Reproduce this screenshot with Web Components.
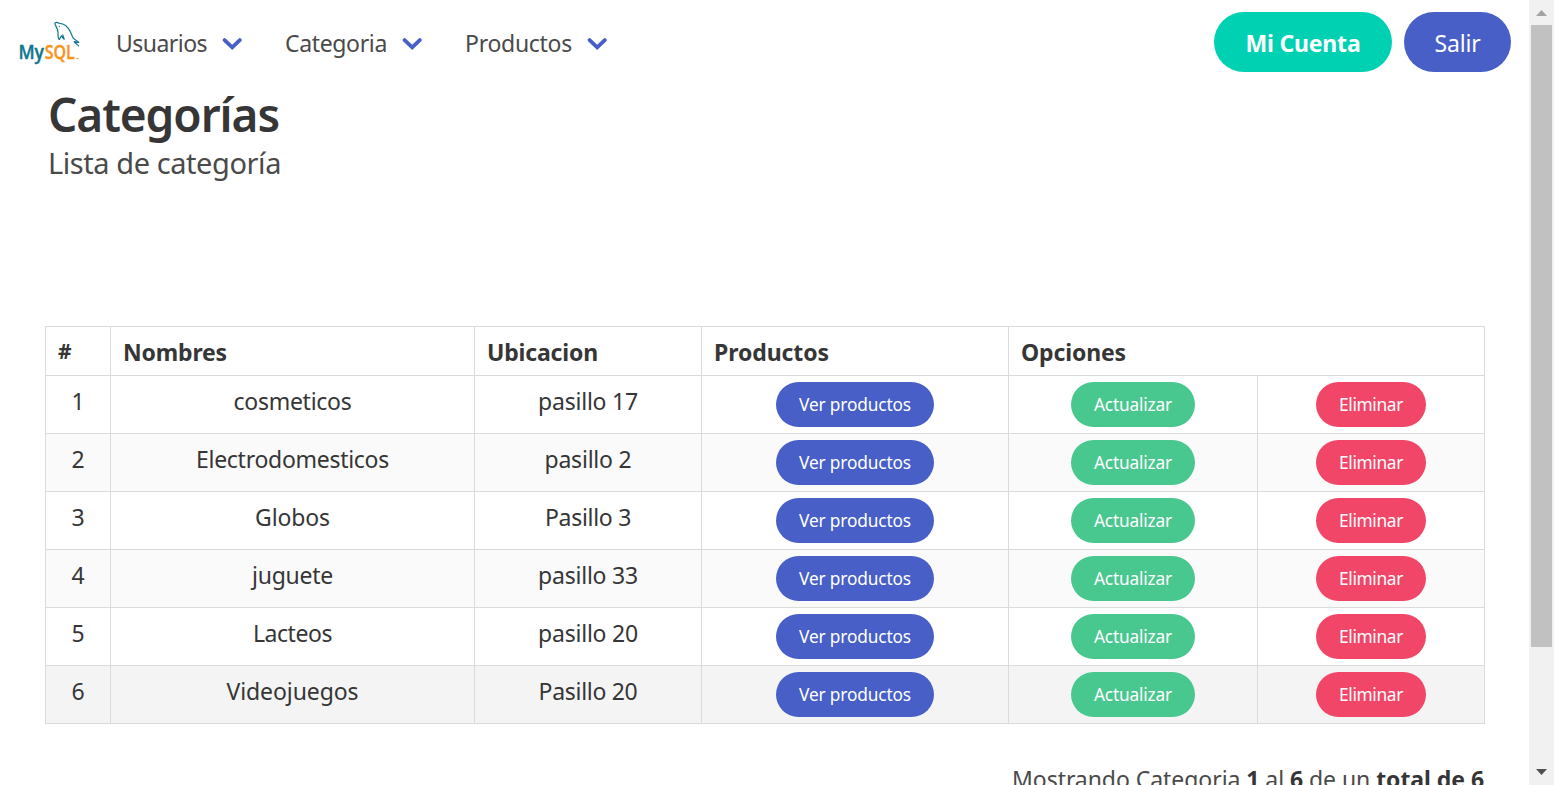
<!DOCTYPE html>
<html lang="es">
<head>
<meta charset="utf-8">
<title>Categorías</title>
<style>
html,body{margin:0;height:100%;overflow:hidden;background:#fff}
body{font-family:"Noto Sans","Open Sans",sans-serif;color:#4a4a4a}
</style>
</head>
<body>
<categories-page></categories-page>
<script>
// Single line of text whose tracking is tuned so that it spans the given width.
customElements.define('fit-text', class extends HTMLElement {
  constructor() {
    super();
    this.attachShadow({mode: 'open'}).innerHTML =
      '<style>:host{display:inline-block;white-space:pre}span{display:inline-block}</style><span><slot></slot></span>';
  }
  connectedCallback() {
    const w = parseFloat(this.getAttribute('w'));
    if (!w) return;
    const span = this.shadowRoot.querySelector('span');
    const n = this.textContent.length;
    span.style.letterSpacing = (w - span.getBoundingClientRect().width) / n + 'px';
  }
});

customElements.define('pill-button', class extends HTMLElement {
  constructor() {
    super();
    this.attachShadow({mode: 'open'}).innerHTML = `<style>
:host{display:inline-flex;box-sizing:border-box;align-items:center;justify-content:center;width:var(--w);height:45px;border-radius:30px;color:#fff;font-size:17.3px;line-height:24px;background:#485fc7}
:host([kind=success]){background:#48c78e}
:host([kind=danger]){background:#f14668}
:host([kind=primary]){background:#00d1b2}
:host([large]){height:60px;font-size:23px;padding-top:2px}
:host([bold]){font-weight:700}
</style><slot></slot>`;
  }
});

customElements.define('brand-logo', class extends HTMLElement {
  constructor() {
    super();
    this.attachShadow({mode: 'open'}).innerHTML = `<style>:host{display:block;width:80px;height:60px}svg{display:block}</style>
<svg width="80" height="60" viewBox="0 0 80 60" fill="none">
<g stroke="#10768f" stroke-width="1.2" stroke-linecap="round" stroke-linejoin="round">
<path d="M49.4 27.4C47.6 26.6 48.2 23 48 20.5C47.8 17 46.5 14.8 45.2 12.6C44.2 10.8 45.6 10 47.5 10.6L49.5 11.3C54 11.5 58 15 60.2 19.5C61.7 22.5 62.3 25 63.6 26.6C65 27.6 67.2 28.6 68.6 30.4"/>
<path d="M49.4 27.4L51.4 23.8C52.2 25.6 53.2 26.6 54.2 27.2C53.6 25.6 53.2 24.6 52.8 22.8"/>
<path d="M68.6 30.4L64.2 29.6C65 31 67 32.2 68.6 33.8"/>
<path d="M49.4 14.4v.2"/></g>
<text x="8.4" y="47.3" font-family="Open Sans,Noto Sans,sans-serif" font-weight="600" font-size="19" fill="#10768f" stroke="#10768f" stroke-width=".4" textLength="25.6" lengthAdjust="spacingAndGlyphs">My</text>
<text x="34.8" y="47.3" font-family="Open Sans,Noto Sans,sans-serif" font-weight="600" font-size="19" fill="#f7941d" stroke="#f7941d" stroke-width=".4" textLength="30" lengthAdjust="spacingAndGlyphs">SQL</text>
<path d="M66 46.5h3" stroke="#f9b868" stroke-width="1.2"/></svg>`;
  }
});

customElements.define('nav-item', class extends HTMLElement {
  constructor() {
    super();
    this.attachShadow({mode: 'open'}).innerHTML = `<style>
:host{display:flex;align-items:center;gap:15px;font-size:23px;line-height:36px}
svg{display:block;flex:none;margin-right:1px}</style><slot></slot>
<svg width="20" height="14" viewBox="0 0 20 14" fill="none" stroke="#485fc7" stroke-width="3.8" stroke-linecap="round" stroke-linejoin="miter"><path d="M2.6 3.1L10.2 10.3L17.8 3.1"/></svg>`;
  }
});

customElements.define('top-bar', class extends HTMLElement {
  constructor() {
    super();
    this.attachShadow({mode: 'open'}).innerHTML = `<style>
:host{display:flex;align-items:center;height:84px;box-sizing:border-box;padding:0 18px 0 10px}
nav{display:flex;gap:42px;margin-left:26px;padding-top:3px}
.end{display:flex;gap:12px;margin-left:auto}
nav fit-text{margin-bottom:2px}</style>
<brand-logo></brand-logo>
<nav>
<nav-item><fit-text w="91">Usuarios</fit-text></nav-item>
<nav-item><fit-text w="102">Categoria</fit-text></nav-item>
<nav-item><fit-text w="107">Productos</fit-text></nav-item>
</nav>
<div class="end">
<pill-button kind="primary" large bold style="--w:178px"><fit-text w="115">Mi Cuenta</fit-text></pill-button>
<pill-button large style="--w:107px"><fit-text w="46">Salir</fit-text></pill-button>
</div>`;
  }
});

customElements.define('category-table', class extends HTMLElement {
  constructor() {
    super();
    const rows = [
      ['1', 'cosmeticos', 118, 'pasillo 17', 100],
      ['2', 'Electrodomesticos', 193, 'pasillo 2', 87],
      ['3', 'Globos', 75, 'Pasillo 3', 86],
      ['4', 'juguete', 81, 'pasillo 33', 100],
      ['5', 'Lacteos', 79, 'pasillo 20', 100],
      ['6', 'Videojuegos', 132, 'Pasillo 20', 99]
    ];
    this.attachShadow({mode: 'open'}).innerHTML = `<style>
:host{display:block;box-sizing:border-box;width:1440px;border:1px solid #dbdbdb;border-bottom:0;color:#363636;font-size:23px;line-height:36px}
.row{display:grid;grid-template-columns:65px 364px 227px 307px 249px 226px;height:58px;box-sizing:border-box;border-bottom:1px solid #dbdbdb}
.row>div{box-sizing:border-box;border-right:1px solid #dbdbdb;text-align:center;padding-top:7px;height:57px}
.row>div:last-child{border-right:0}
.row>.b{padding-top:6px;display:flex;justify-content:center;align-items:flex-start}
.head{height:49px;font-weight:700}
.head>div{text-align:left;padding:7px 0 0 12px;height:48px}
.head>div:last-child{grid-column:span 2}
.alt{background:#fafafa}
.active{background:#f4f4f4}
.hash{font-size:21px;line-height:34px}
</style>
<div class="row head"><div class="hash"><fit-text w="14">#</fit-text></div><div><fit-text w="104">Nombres</fit-text></div><div><fit-text w="111">Ubicacion</fit-text></div><div><fit-text w="115">Productos</fit-text></div><div><fit-text w="105">Opciones</fit-text></div></div>` +
    rows.map((r, i) => `<div class="row ${i === 5 ? 'active' : i % 2 ? 'alt' : ''}"><div>${r[0]}</div><div><fit-text w="${r[2]}">${r[1]}</fit-text></div><div><fit-text w="${r[4]}">${r[3]}</fit-text></div>
<div class="b"><pill-button style="--w:158px"><fit-text w="112">Ver productos</fit-text></pill-button></div>
<div class="b"><pill-button kind="success" style="--w:124px"><fit-text w="78">Actualizar</fit-text></pill-button></div>
<div class="b"><pill-button kind="danger" style="--w:110px"><fit-text w="64">Eliminar</fit-text></pill-button></div></div>`).join('');
  }
});

customElements.define('page-scrollbar', class extends HTMLElement {
  constructor() {
    super();
    this.attachShadow({mode: 'open'}).innerHTML = `<style>
:host{display:flex;flex-direction:column;align-items:center;width:25px;height:100%;background:#f1f1f1}
.thumb{width:21px;height:622px;background:#c1c1c1}
svg{display:block;flex:none}.down{margin-top:auto}</style>
<svg width="25" height="25"><path d="M7 16L12.5 10L18 16Z" fill="#a3a3a3"/></svg>
<div class="thumb"></div>
<svg class="down" width="25" height="25"><path d="M7 9L12.5 15L18 9Z" fill="#505050"/></svg>`;
  }
});

customElements.define('categories-page', class extends HTMLElement {
  constructor() {
    super();
    this.attachShadow({mode: 'open'}).innerHTML = `<style>
:host{display:flex;height:785px;overflow:hidden}
main{flex:1;height:785px;overflow:hidden}
h1,h2,p{margin:0}
header{padding-left:48px;height:242px;box-sizing:border-box}
h1{font-size:46px;line-height:54px;font-weight:600;color:#363636;padding-top:3px}
h2{font-size:29px;line-height:38px;font-weight:400;padding-top:3px}
category-table{margin-left:45px}
p{margin:37px 45px 0 0;text-align:right;font-size:23px;line-height:36px}
strong{color:#363636}
</style>
<main><top-bar></top-bar>
<header><h1><fit-text w="231">Categorías</fit-text></h1><h2><fit-text w="233">Lista de categoría</fit-text></h2></header>
<category-table></category-table>
<p><fit-text w="472">Mostrando Categoria <strong>1</strong> al <strong>6</strong> de un <strong>total de 6</strong></fit-text></p>
</main>
<page-scrollbar></page-scrollbar>`;
  }
});
</script>
</body>
</html>
